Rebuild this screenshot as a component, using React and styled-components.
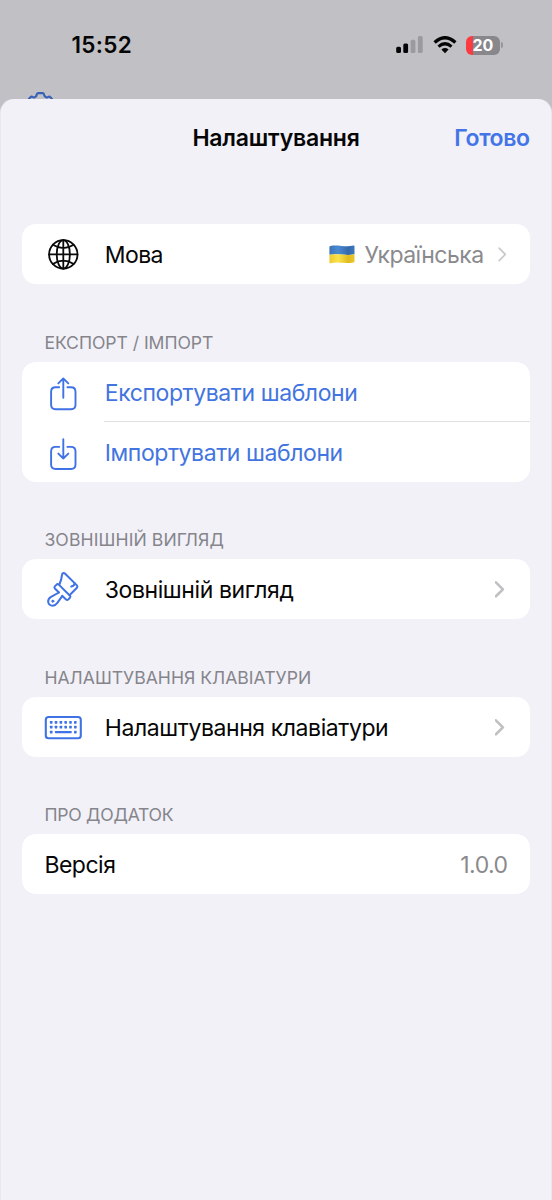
import React from "react";
import styled, { createGlobalStyle } from "styled-components";

const GlobalStyle = createGlobalStyle`
  * {
    box-sizing: border-box;
  }
  body {
    margin: 0;
    background: #c1c0c5;
    font-family: Inter, "Noto Sans", sans-serif;
    color: #060606;
  }
`;

//ICONS
const GearIcon = () => (
  <Gear viewBox="0 0 30 8">
    <path
      d="M1.6 8.4 L3.2 6.4 Q4.4 5.2 5.6 5.9 L7 6.6 Q8.9 5.9 9.4 4.8 L9.9 3 Q10.2 2.1 11.2 2.1 H15.6 Q16.6 2.1 16.9 3 L17.4 4.8 Q17.9 5.9 19.8 6.6 L21.2 5.9 Q22.4 5.2 23.6 6.4 L25.4 8.4"
      fill="none"
      stroke="#365fb8"
      strokeWidth="2.1"
    />
  </Gear>
);

const SignalIcon = () => (
  <svg width="28" height="18" viewBox="0 0 28 18">
    <rect x="0.2" y="10.7" width="4.8" height="6.3" rx="1.5" fill="#050505" />
    <rect x="7.3" y="7.4" width="4.8" height="9.6" rx="1.5" fill="#050505" />
    <rect x="14.6" y="3.8" width="4.8" height="13.2" rx="1.5" fill="#9b9a9e" />
    <rect x="21.9" y="0" width="4.8" height="17" rx="1.5" fill="#9b9a9e" />
  </svg>
);

const WifiIcon = () => (
  <svg width="24" height="18" viewBox="0 0 24 18" fill="none">
    <path d="M1.6 6.5 Q12 -3.1 22.4 6.5" stroke="#050505" strokeWidth="3.3" />
    <path d="M5.5 10.6 Q12 4.9 18.5 10.6" stroke="#050505" strokeWidth="3.2" />
    <path d="M12 17.2 L8.4 13.5 Q12 10.7 15.6 13.5 Z" fill="#050505" />
  </svg>
);

const GlobeIcon = () => (
  <RowSvg viewBox="0 0 38 40" $stroke="#0a0a0a" $width={1.8}>
    <circle cx="19.3" cy="20.4" r="14.2" />
    <ellipse cx="19.3" cy="20.4" rx="6.6" ry="14.2" />
    <path d="M19.3 6.2 V34.6 M5.1 20.4 H33.5 M8.9 10.8 Q19.3 17.4 29.7 10.8 M8.9 30 Q19.3 23.4 29.7 30" />
  </RowSvg>
);

const ExportIcon = () => (
  <RowSvg viewBox="0 0 38 40">
    <path d="M15.2 15.2 H11.6 Q7.1 15.2 7.1 19.7 V32.8 Q7.1 37.3 11.6 37.3 H27 Q31.5 37.3 31.5 32.8 V19.7 Q31.5 15.2 27 15.2 H23.4" />
    <path d="M19.3 25.7 V6.4 M14.3 11.4 L19.3 6.4 L24.3 11.4" />
  </RowSvg>
);

const ImportIcon = () => (
  <RowSvg viewBox="0 0 38 40">
    <path d="M15.2 14.9 H11.6 Q7.1 14.9 7.1 19.4 V32.5 Q7.1 37 11.6 37 H27 Q31.5 37 31.5 32.5 V19.4 Q31.5 14.9 27 14.9 H23.4" />
    <path d="M19.3 7.2 V26.5 M14.3 21.6 L19.3 26.5 L24.3 21.6" />
  </RowSvg>
);

const BrushIcon = () => (
  <RowSvg viewBox="0 0 38 40" $width={2}>
    <path d="M15.4 15.5 Q17.6 10.8 18 5.9 Q18.6 3.3 20.9 4.5 L32.9 16.4 Q34 17.6 32.9 18.7 L26 25.7" />
    <path d="M30.6 14.2 Q30.6 16.9 27.2 17.5" />
    <path d="M14.9 23.5 L10.9 19.5 Q9.9 18.4 10.8 17.4 L12.6 15.6 Q13.7 14.6 14.8 15.6 L26 26.7 Q26.9 27.7 26 28.7 L24.2 30.5 Q23.1 31.4 22.1 30.5 L18.3 26.9" />
    <path d="M14.9 23.5 L6.6 28.1 Q3.8 30.1 4.2 33.1 Q5 36.7 8.8 36.7 Q11.6 36.5 13 34.3 L18.3 26.9" />
    <circle cx="8.8" cy="32.2" r="1.1" fill="#3f72e5" strokeWidth="0.8" />
  </RowSvg>
);

const KeyboardIcon = () => (
  <RowSvg viewBox="0 0 38 40">
    <rect x="1.8" y="10" width="35" height="21.2" rx="2.8" strokeWidth="2.1" />
    <g fill="#3f72e5" stroke="none">
      {[14.1, 18.8].map((y) =>
        [5.9, 10.7, 15.6, 20.4, 25.2, 30].map((x) => (
          <rect key={`${x}-${y}`} x={x} y={y} width="2.6" height="2.6" rx="0.4" />
        ))
      )}
      <rect x="5.9" y="23.8" width="2.6" height="2.6" rx="0.4" />
      <rect x="10.9" y="24" width="16.8" height="2.2" rx="0.6" />
      <rect x="30" y="23.8" width="2.6" height="2.6" rx="0.4" />
    </g>
  </RowSvg>
);

const FlagIcon = () => (
  <Flag viewBox="0 0 26 19">
    <defs>
      <linearGradient id="blue" x1="0" y1="0" x2="1" y2="0">
        <stop offset="0" stopColor="#3b74b9" />
        <stop offset="0.35" stopColor="#4a8ad2" />
        <stop offset="0.75" stopColor="#3369ac" />
        <stop offset="1" stopColor="#3f78be" />
      </linearGradient>
      <linearGradient id="yellow" x1="0" y1="0" x2="1" y2="0">
        <stop offset="0" stopColor="#eccb30" />
        <stop offset="0.35" stopColor="#fbe24a" />
        <stop offset="0.75" stopColor="#e1bb20" />
        <stop offset="1" stopColor="#e8c72d" />
      </linearGradient>
    </defs>
    <path
      d="M0.4 2 Q0.5 1.2 1.4 1 C9 -0.7 16 2.6 24.4 0.6 Q25.5 0.4 25.5 1.4 V9.2 C17 11.2 9 8 0.4 9.8 Z"
      fill="url(#blue)"
    />
    <path
      d="M0.4 9.8 C9 8 17 11.2 25.5 9.2 V16.4 Q25.5 17.2 24.6 17.4 C16 19.4 9 16.2 1.4 18.2 Q0.4 18.4 0.4 17.4 Z"
      fill="url(#yellow)"
    />
  </Flag>
);

const Chevron = ({ thin }) => (
  <ChevronSvg viewBox="0 0 12 20" $thin={thin}>
    <path d={thin ? "M4.2 4.2 L10.3 10.4 L4.2 16.6" : "M0.9 3.3 L7.9 10.3 L0.9 17.3"} />
  </ChevronSvg>
);

const App = () => {
  return (
    <Screen>
      <GlobalStyle />
      <StatusBar>
        <Time>15:52</Time>
        <StatusIcons>
          <SignalIcon />
          <WifiIcon />
          <Battery>
            <BatteryBody>20</BatteryBody>
            <BatteryCap />
          </Battery>
        </StatusIcons>
      </StatusBar>
      <Behind>
        <GearIcon />
      </Behind>
      <Sheet>
        <NavBar>
          <Title>Налаштування</Title>
          <Done>Готово</Done>
        </NavBar>
        <Card>
          <Row>
            <GlobeIcon />
            <Label $spacing={-0.6}>Мова</Label>
            <Value>
              <FlagIcon />
              <Language>Українська</Language>
              <Chevron thin />
            </Value>
          </Row>
        </Card>
        <SectionTitle $spacing={-0.05}>ЕКСПОРТ / ІМПОРТ</SectionTitle>
        <Card>
          <Row>
            <ExportIcon />
            <Label $link>Експортувати шаблони</Label>
          </Row>
          <Divider />
          <Row>
            <ImportIcon />
            <Label $link>Імпортувати шаблони</Label>
          </Row>
        </Card>
        <SectionTitle $spacing={0.1}>ЗОВНІШНІЙ ВИГЛЯД</SectionTitle>
        <Card>
          <Row>
            <BrushIcon />
            <Label>Зовнішній вигляд</Label>
            <Value>
              <Chevron />
            </Value>
          </Row>
        </Card>
        <SectionTitle>НАЛАШТУВАННЯ КЛАВІАТУРИ</SectionTitle>
        <Card>
          <Row>
            <KeyboardIcon />
            <Label>Налаштування клавіатури</Label>
            <Value>
              <Chevron />
            </Value>
          </Row>
        </Card>
        <SectionTitle $spacing={-0.25}>ПРО ДОДАТОК</SectionTitle>
        <Card>
          <Row>
            <Label $spacing={-0.5}>Версія</Label>
            <Value>
              <Version>1.0.0</Version>
            </Value>
          </Row>
        </Card>
      </Sheet>
    </Screen>
  );
};

const Screen = styled.div`
  display: flex;
  flex-direction: column;
  width: 552px;
  height: 1200px;
  overflow: hidden;
  background: #c1c0c5;
`;

const StatusBar = styled.div`
  display: flex;
  justify-content: space-between;
  align-items: center;
  height: 90px;
  padding: 0 49px 0 71.5px;
`;

const Time = styled.span`
  margin-top: -1px;
  font-size: 22.5px;
  font-weight: 600;
  letter-spacing: 0.3px;
`;

const StatusIcons = styled.div`
  display: flex;
  align-items: center;
  gap: 9px;
`;

const Battery = styled.div`
  display: flex;
  align-items: center;
  gap: 1px;
`;

const BatteryBody = styled.div`
  display: flex;
  align-items: center;
  justify-content: center;
  width: 34.5px;
  height: 19px;
  border-radius: 6px;
  background: linear-gradient(to right, #fc3b41 7px, #88878c 7px);
  color: #fff;
  font-size: 16px;
  font-weight: 700;
  letter-spacing: -0.3px;
`;

const BatteryCap = styled.div`
  width: 2px;
  height: 6px;
  border-radius: 0 2px 2px 0;
  background: #96959a;
`;

const Behind = styled.div`
  display: flex;
  height: 9px;
  padding: 1px 0 0 27px;
`;

const Gear = styled.svg`
  width: 30px;
  height: 8px;
`;

const Sheet = styled.div`
  flex: 1;
  padding: 0 21.4px;
  border: 1px solid #e9e8ef;
  border-width: 0 1px;
  border-radius: 14px 14px 0 0;
  background: #f2f1f8;
`;

const NavBar = styled.div`
  display: grid;
  grid-template-columns: 1fr auto 1fr;
  align-items: center;
  height: 78px;
  margin-bottom: 47px;
`;

const Title = styled.div`
  grid-column: 2;
  font-size: 23px;
  font-weight: 600;
  letter-spacing: -0.2px;
`;

const Done = styled.div`
  justify-self: end;
  color: #4375e8;
  font-size: 23px;
  font-weight: 600;
  letter-spacing: -0.4px;
`;

const Card = styled.div`
  border-radius: 14px;
  background: #fff;
`;

const Row = styled.div`
  display: flex;
  align-items: center;
  height: 60px;
  padding: 0 22px;
`;

const Divider = styled.div`
  height: 1px;
  margin: -1px 0 0 82px;
  background: #e0e0e3;
`;

const RowSvg = styled.svg`
  flex: none;
  width: 38px;
  height: 40px;
  margin-right: 22.4px;
  fill: none;
  stroke: ${(props) => props.$stroke || "#3f72e5"};
  stroke-width: ${(props) => props.$width || 1.9};
  stroke-linecap: round;
  stroke-linejoin: round;
`;

const Label = styled.span`
  padding-top: 2px;
  color: ${(props) => (props.$link ? "#4375e0" : "#060606")};
  font-size: 23px;
  letter-spacing: ${(props) => props.$spacing || -0.42}px;
  white-space: nowrap;
`;

const Value = styled.div`
  display: flex;
  align-items: center;
  margin-left: auto;
  color: #8a8a8e;
  font-size: 23px;
`;

const Flag = styled.svg`
  width: 26px;
  height: 19px;
  margin-right: 9px;
`;

const Language = styled.span`
  margin-right: 11.7px;
  padding-top: 2px;
  letter-spacing: -0.55px;
`;

const Version = styled.span`
  padding-top: 2px;
  letter-spacing: -0.5px;
`;

const ChevronSvg = styled.svg`
  width: 12px;
  height: 20px;
  margin-right: 0.4px;
  fill: none;
  stroke: ${(props) => (props.$thin ? "#c9c9cc" : "#c0c0c3")};
  stroke-width: ${(props) => (props.$thin ? 1.7 : 2.6)};
  stroke-linecap: round;
  stroke-linejoin: round;
`;

const SectionTitle = styled.div`
  display: flex;
  align-items: flex-end;
  height: 77.6px;
  padding: 0 22px 8px;
  color: #85858b;
  font-size: 17.6px;
  line-height: 22px;
  letter-spacing: ${(props) => props.$spacing || 0}px;
`;

export default App;
